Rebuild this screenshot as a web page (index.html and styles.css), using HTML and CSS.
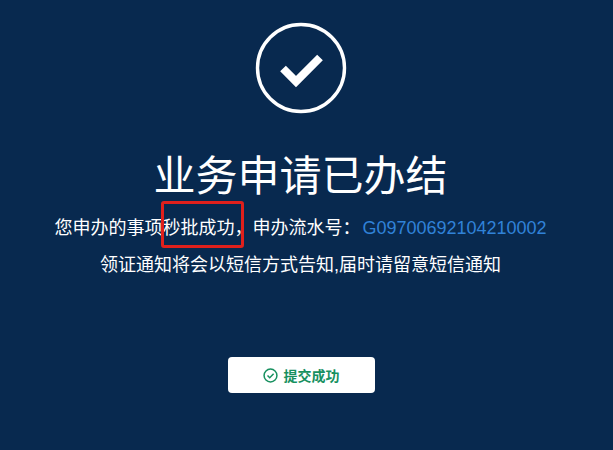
FILE: index.html
```html
<!DOCTYPE html>
<html lang="zh-CN">
<head>
<meta charset="utf-8">
<title>业务申请已办结</title>
<link rel="stylesheet" href="styles.css">
</head>
<body>
<main class="page">
  <svg class="result-icon" width="92" height="92" viewBox="0 0 92 92" aria-hidden="true">
    <circle cx="46" cy="46" r="43.5" fill="none" stroke="#fff" stroke-width="3.4"/>
    <path d="M28 46.5 L41 59.500 L65 35.500" fill="none" stroke="#fff" stroke-width="8"/>
  </svg>
  <h1 class="title">业务申请已办结</h1>
  <p class="line">您申办的事项<span class="mark">秒批成功<span class="mark-box"></span></span>，申办流水号：<span class="code">G09700692104210002</span></p>
  <p class="line">领证通知将会以短信方式告知,届时请留意短信通知</p>
  <div class="button">
    <svg class="button-icon" width="15" height="15" viewBox="0 0 14 14" aria-hidden="true">
      <circle cx="7" cy="7" r="6" fill="none" stroke="#17905f" stroke-width="1.400"/>
      <path d="M4.200 7 L6.300 9.100 L9.900 5.300" fill="none" stroke="#17905f" stroke-width="1.400"/>
    </svg>
    <span>提交成功</span>
  </div>
</main>
</body>
</html>
```

FILE: styles.css
```css
html, body {
  margin: 0;
  height: 100%;
  background: #08294f;
  overflow: hidden;
}

.page {
  display: flex;
  flex-direction: column;
  align-items: center;
  padding-top: 22px;
  padding-right: 12px;
  font-family: "Liberation Sans", "Noto Sans CJK SC", sans-serif;
  color: #fff;
}

.result-icon {
  display: block;
}

.title {
  margin: 35px 0 5px;
  font-size: 42px;
  line-height: 56px;
  font-weight: 400;
}

.line {
  margin: 0;
  font-size: 18px;
  line-height: 37px;
  white-space: nowrap;
}

.mark {
  position: relative;
}

.mark-box {
  position: absolute;
  left: -1px;
  right: -10px;
  top: -17px;
  bottom: -10px;
  border: 3px solid #e0201c;
  border-radius: 3px;
}

.code {
  margin-left: 2px;
  color: #3082d8;
}

.button {
  display: flex;
  align-items: center;
  justify-content: center;
  gap: 6px;
  width: 147px;
  height: 36px;
  margin-top: 73px;
  margin-left: 1px;
  border-radius: 4px;
  background: #fff;
  color: #17905f;
  font-size: 14px;
  font-weight: 700;
}

.button-icon {
  display: block;
}
```
